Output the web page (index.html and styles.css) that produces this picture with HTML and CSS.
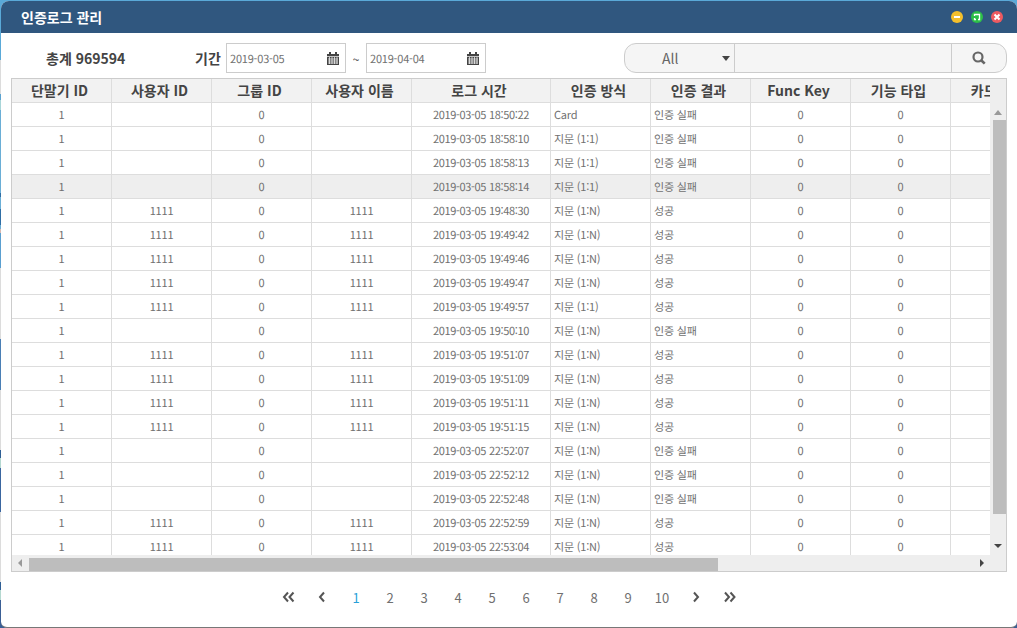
FILE: index.html
```html
<!DOCTYPE html>
<html lang="ko">
  <head>
    <meta charset="UTF-8" />
    <title>인증로그 관리</title>
    <link rel="stylesheet" href="styles.css">
  </head>
  <body>
    <div class="window">
      <div class="titlebar">
        <span class="title">인증로그 관리</span>
        <div class="win-buttons">
          <span class="win-btn min"><svg width="12" height="12" viewBox="0 0 12 12"><path d="M3 6h6" stroke="#fff" stroke-width="2"/></svg></span>
          <span class="win-btn max"><svg width="12" height="12" viewBox="0 0 12 12"><path d="M3.5 5V3.5h5v5H7M3.5 7v1.5H5" fill="none" stroke="#fff" stroke-width="1.3"/></svg></span>
          <span class="win-btn close"><svg width="12" height="12" viewBox="0 0 12 12"><path d="M3.5 3.5l5 5M8.5 3.5l-5 5" stroke="#fff" stroke-width="2"/></svg></span>
        </div>
      </div>

      <div class="toolbar">
        <span class="total">총계 969594</span>
        <span class="period-label">기간</span>
        <div class="date-box">
          <span>2019-03-05</span>
          <svg class="cal" width="12" height="13" viewBox="0 0 12 13"><path fill="#444" d="M0 2h2V0h2v2h4V0h2v2h2v11H0z"/><path stroke="#fff" stroke-width=".7" d="M0 4.5h12M1 7h10M1 9h10M1 11h10M2.5 5v7M5 5v7M7.5 5v7M10 5v7"/></svg>
        </div>
        <span class="tilde">~</span>
        <div class="date-box">
          <span>2019-04-04</span>
          <svg class="cal" width="12" height="13" viewBox="0 0 12 13"><path fill="#444" d="M0 2h2V0h2v2h4V0h2v2h2v11H0z"/><path stroke="#fff" stroke-width=".7" d="M0 4.5h12M1 7h10M1 9h10M1 11h10M2.5 5v7M5 5v7M7.5 5v7M10 5v7"/></svg>
        </div>
        <div class="search-group">
          <div class="search-select"><span>All</span><i class="caret"></i></div>
          <div class="search-input"></div>
          <div class="search-btn"><svg width="14" height="14" viewBox="0 0 14 14"><circle cx="6" cy="6" r="4.5" fill="none" stroke="#666" stroke-width="2.2"/><path d="M9.5 9.5l3.2 3.2" stroke="#666" stroke-width="2.6"/></svg></div>
        </div>
      </div>

      <div class="grid-wrap">
        <div class="grid-view">
          <table class="grid">
            <colgroup>
              <col class="c100"><col class="c100"><col class="c100"><col class="c100"><col class="c139"><col class="c100"><col class="c100"><col class="c100"><col class="c100"><col class="c100">
            </colgroup>
            <thead>
              <tr><th>단말기 ID</th><th>사용자 ID</th><th>그룹 ID</th><th>사용자 이름</th><th>로그 시간</th><th>인증 방식</th><th>인증 결과</th><th>Func Key</th><th>기능 타입</th><th>카드 번호</th></tr>
            </thead>
            <tbody>
              <tr><td>1</td><td></td><td>0</td><td></td><td class="time">2019-03-05 18:50:22</td><td class="left">Card</td><td class="left">인증 실패</td><td>0</td><td>0</td><td></td></tr>
              <tr><td>1</td><td></td><td>0</td><td></td><td class="time">2019-03-05 18:58:10</td><td class="left">지문 (1:1)</td><td class="left">인증 실패</td><td>0</td><td>0</td><td></td></tr>
              <tr><td>1</td><td></td><td>0</td><td></td><td class="time">2019-03-05 18:58:13</td><td class="left">지문 (1:1)</td><td class="left">인증 실패</td><td>0</td><td>0</td><td></td></tr>
              <tr class="selected"><td>1</td><td></td><td>0</td><td></td><td class="time">2019-03-05 18:58:14</td><td class="left">지문 (1:1)</td><td class="left">인증 실패</td><td>0</td><td>0</td><td></td></tr>
              <tr><td>1</td><td>1111</td><td>0</td><td>1111</td><td class="time">2019-03-05 19:48:30</td><td class="left">지문 (1:N)</td><td class="left">성공</td><td>0</td><td>0</td><td></td></tr>
              <tr><td>1</td><td>1111</td><td>0</td><td>1111</td><td class="time">2019-03-05 19:49:42</td><td class="left">지문 (1:N)</td><td class="left">성공</td><td>0</td><td>0</td><td></td></tr>
              <tr><td>1</td><td>1111</td><td>0</td><td>1111</td><td class="time">2019-03-05 19:49:46</td><td class="left">지문 (1:N)</td><td class="left">성공</td><td>0</td><td>0</td><td></td></tr>
              <tr><td>1</td><td>1111</td><td>0</td><td>1111</td><td class="time">2019-03-05 19:49:47</td><td class="left">지문 (1:N)</td><td class="left">성공</td><td>0</td><td>0</td><td></td></tr>
              <tr><td>1</td><td>1111</td><td>0</td><td>1111</td><td class="time">2019-03-05 19:49:57</td><td class="left">지문 (1:1)</td><td class="left">성공</td><td>0</td><td>0</td><td></td></tr>
              <tr><td>1</td><td></td><td>0</td><td></td><td class="time">2019-03-05 19:50:10</td><td class="left">지문 (1:N)</td><td class="left">인증 실패</td><td>0</td><td>0</td><td></td></tr>
              <tr><td>1</td><td>1111</td><td>0</td><td>1111</td><td class="time">2019-03-05 19:51:07</td><td class="left">지문 (1:N)</td><td class="left">성공</td><td>0</td><td>0</td><td></td></tr>
              <tr><td>1</td><td>1111</td><td>0</td><td>1111</td><td class="time">2019-03-05 19:51:09</td><td class="left">지문 (1:N)</td><td class="left">성공</td><td>0</td><td>0</td><td></td></tr>
              <tr><td>1</td><td>1111</td><td>0</td><td>1111</td><td class="time">2019-03-05 19:51:11</td><td class="left">지문 (1:N)</td><td class="left">성공</td><td>0</td><td>0</td><td></td></tr>
              <tr><td>1</td><td>1111</td><td>0</td><td>1111</td><td class="time">2019-03-05 19:51:15</td><td class="left">지문 (1:N)</td><td class="left">성공</td><td>0</td><td>0</td><td></td></tr>
              <tr><td>1</td><td></td><td>0</td><td></td><td class="time">2019-03-05 22:52:07</td><td class="left">지문 (1:N)</td><td class="left">인증 실패</td><td>0</td><td>0</td><td></td></tr>
              <tr><td>1</td><td></td><td>0</td><td></td><td class="time">2019-03-05 22:52:12</td><td class="left">지문 (1:N)</td><td class="left">인증 실패</td><td>0</td><td>0</td><td></td></tr>
              <tr><td>1</td><td></td><td>0</td><td></td><td class="time">2019-03-05 22:52:48</td><td class="left">지문 (1:N)</td><td class="left">인증 실패</td><td>0</td><td>0</td><td></td></tr>
              <tr><td>1</td><td>1111</td><td>0</td><td>1111</td><td class="time">2019-03-05 22:52:59</td><td class="left">지문 (1:N)</td><td class="left">성공</td><td>0</td><td>0</td><td></td></tr>
              <tr><td>1</td><td>1111</td><td>0</td><td>1111</td><td class="time">2019-03-05 22:53:04</td><td class="left">지문 (1:N)</td><td class="left">성공</td><td>0</td><td>0</td><td></td></tr>
            </tbody>
          </table>
        </div>
        <div class="vscroll">
          <i class="arrow up"></i>
          <div class="vthumb"></div>
          <i class="arrow down"></i>
        </div>
        <div class="hscroll">
          <i class="arrow left"></i>
          <div class="htrack"><div class="hthumb"></div></div>
          <i class="arrow right"></i>
        </div>
      </div>

      <div class="pager">
        <a class="page-item"><svg width="14" height="12" viewBox="0 0 14 12"><path d="M7 1.5L3 6l4 4.5M12.5 1.5L8.5 6l4 4.5" fill="none" stroke="#555" stroke-width="2"/></svg></a>
        <a class="page-item"><svg width="8" height="12" viewBox="0 0 8 12"><path d="M6 1.5L2 6l4 4.5" fill="none" stroke="#555" stroke-width="2"/></svg></a>
        <a class="page-item current">1</a>
        <a class="page-item">2</a>
        <a class="page-item">3</a>
        <a class="page-item">4</a>
        <a class="page-item">5</a>
        <a class="page-item">6</a>
        <a class="page-item">7</a>
        <a class="page-item">8</a>
        <a class="page-item">9</a>
        <a class="page-item">10</a>
        <a class="page-item"><svg width="8" height="12" viewBox="0 0 8 12"><path d="M2 1.5L6 6l-4 4.5" fill="none" stroke="#555" stroke-width="2"/></svg></a>
        <a class="page-item"><svg width="14" height="12" viewBox="0 0 14 12"><path d="M2 1.5L6 6l-4 4.5M7.5 1.5l4 4.5-4 4.5" fill="none" stroke="#555" stroke-width="2"/></svg></a>
      </div>
    </div>
  </body>
</html>
```

FILE: styles.css
```css
html, body {
  height: 100%;
}

body {
  margin: 0;
  height: 628px;
  overflow: hidden;
  box-sizing: border-box;
  padding: 1px 0 0 1px;
  font-family: "Noto Sans CJK KR", "Noto Sans", sans-serif;
  color: #555;
  background: linear-gradient(
    #5aa9d8 0 60px, #dcdcdc 60px 94px, #5ba3d0 94px 100px, #a8d5d8 100px 110px,
    #6aaed6 110px 193px, #2f6ea5 193px 197px, #6aaed6 197px 209px, #2f6ea5 209px 225px,
    #6aaed6 225px 229px, #d8b8b0 229px 233px, #5a9fd0 233px 268px, #dcdcdc 268px 339px,
    #4a7fb5 339px 390px, #dcdcdc 390px 450px, #2f5f95 450px 458px, #b4d8d0 458px 468px,
    #3a66a0 468px 512px, #dcdcdc 512px 582px, #2f5f95 582px 590px, #b4d8d0 590px 600px,
    #3a5f95 600px
  );
}

.window {
  height: 626px;
  background: #fff;
  border-bottom: 1px solid #777;
  border-radius: 8px 8px 6px 6px;
  overflow: hidden;
  display: flex;
  flex-direction: column;
}

.titlebar {
  height: 32px;
  flex: none;
  background: #30577f;
  display: flex;
  align-items: center;
  justify-content: space-between;
  padding: 0 14px 0 20px;
}

.title {
  color: #fff;
  font-size: 14px;
  font-weight: bold;
}

.win-buttons {
  display: flex;
  gap: 8px;
}

.win-btn {
  width: 12px;
  height: 12px;
  border-radius: 50%;
  display: block;
}

.win-btn svg {
  display: block;
}

.min { background: #f4bf2c; }
.max { background: #2dbf48; }
.close { background: #ec5a60; }

.toolbar {
  height: 30px;
  margin-top: 10px;
  flex: none;
  display: flex;
  align-items: center;
  font-size: 14px;
  font-weight: bold;
  color: #444;
}

.total {
  margin-left: 45px;
  width: 149px;
}

.period-label {
  width: 31px;
}

.date-box {
  width: 120px;
  height: 30px;
  box-sizing: border-box;
  border: 1px solid #ccc;
  background: #fff;
  display: flex;
  align-items: center;
  justify-content: space-between;
  padding: 0 6px 0 3px;
  font-size: 11px;
  letter-spacing: -0.2px;
  font-weight: normal;
  color: #707070;
  text-rendering: geometricPrecision;
}

.date-box span {
  padding-top: 2px;
}

.tilde {
  width: 20px;
  text-align: center;
  font-size: 12px;
  font-weight: normal;
}

.search-group {
  width: 383px;
  height: 30px;
  box-sizing: border-box;
  margin-left: 138px;
  border: 1px solid #ccc;
  border-radius: 12px;
  background: #f5f5f5;
  display: flex;
  font-weight: normal;
}

.search-select {
  width: 109px;
  display: flex;
  align-items: center;
  justify-content: space-between;
  padding: 0 4px 0 37px;
  box-sizing: border-box;
  color: #666;
  font-size: 14px;
}

.caret {
  border-top: 5px solid #444;
  border-left: 4px solid transparent;
  border-right: 4px solid transparent;
}

.search-input {
  flex: 1;
  border-left: 1px solid #ccc;
  border-right: 1px solid #ccc;
}

.search-btn {
  width: 54px;
  display: flex;
  align-items: center;
  justify-content: center;
}

.grid-wrap {
  width: 996px;
  height: 494px;
  box-sizing: border-box;
  margin: 5px 0 0 10px;
  border: 1px solid #ccc;
  flex: none;
  display: grid;
  grid-template-columns: 978px 16px;
  grid-template-rows: 476px 16px;
  background: #eee;
}

.grid-view {
  overflow: hidden;
  background: #fff;
}

.grid {
  table-layout: fixed;
  width: 1039px;
  border-collapse: separate;
  border-spacing: 0;
  font-size: 11px;
}

.c100 { width: 100px; }
.c139 { width: 139px; }

.grid th {
  height: 22px;
  padding: 0 4px 1px 0;
  background: #f2f2f2;
  border-right: 1px solid #ddd;
  border-bottom: 1px solid #ddd;
  font-size: 14px;
  font-weight: bold;
  color: #444;
  white-space: nowrap;
  overflow: hidden;
}

.grid td {
  height: 23px;
  padding: 0;
  text-align: center;
  border-right: 1px solid #ddd;
  border-bottom: 1px solid #ddd;
  color: #707070;
  letter-spacing: -0.2px;
  text-rendering: geometricPrecision;
  white-space: nowrap;
  overflow: hidden;
}

.grid td.time {
  letter-spacing: -0.33px;
}

.grid td.left {
  text-align: left;
  padding-left: 3px;
}

.selected td {
  background: #eee;
}

.vscroll {
  display: flex;
  flex-direction: column;
  align-items: center;
  padding-top: 31px;
  box-sizing: border-box;
}

.vthumb {
  width: 13px;
  height: 394px;
  margin: 5px 0 0 2px;
  background: #bdbdbd;
}

.arrow {
  display: block;
  width: 0;
  height: 0;
}

.arrow.up {
  border-bottom: 5px solid #999;
  border-left: 4px solid transparent;
  border-right: 4px solid transparent;
}

.arrow.down {
  margin-top: 30px;
  border-top: 4px solid #444;
  border-left: 4px solid transparent;
  border-right: 4px solid transparent;
}

.hscroll {
  grid-column: 1 / span 2;
  display: flex;
  align-items: center;
  padding: 0 22px 0 0;
}

.htrack {
  flex: 1;
  height: 13px;
  align-self: flex-end;
}

.hthumb {
  width: 689px;
  height: 13px;
  background: #bdbdbd;
}

.arrow.left {
  margin: 0 7px 0 6px;
  border-right: 4px solid #999;
  border-top: 4px solid transparent;
  border-bottom: 4px solid transparent;
}

.arrow.right {
  margin-left: 4px;
  border-left: 4px solid #444;
  border-top: 4px solid transparent;
  border-bottom: 4px solid transparent;
}

.pager {
  display: flex;
  justify-content: center;
  margin: 11px 0 0 0;
  height: 28px;
  font-size: 13px;
  color: #707070;
}

.page-item {
  width: 34px;
  display: flex;
  align-items: center;
  justify-content: center;
}

.page-item.current {
  color: #2a9fd8;
}
```
